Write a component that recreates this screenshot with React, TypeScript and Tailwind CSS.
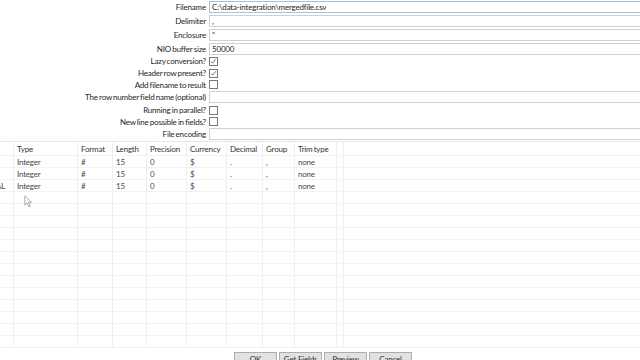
import type { ReactNode } from "react";

type Field =
  | { label: string; kind: "input"; value?: string; h: number; focus?: boolean }
  | { label: string; kind: "check"; checked: boolean; h: number };

const fields: Field[] = [
  { label: "Filename", kind: "input", value: "C:\\data-integration\\mergedfile.csv", h: 14, focus: true },
  { label: "Delimiter", kind: "input", value: ",", h: 14 },
  { label: "Enclosure", kind: "input", value: "\"", h: 14 },
  { label: "NIO buffer size", kind: "input", value: "50000", h: 13 },
  { label: "Lazy conversion?", kind: "check", checked: true, h: 12 },
  { label: "Header row present?", kind: "check", checked: true, h: 12 },
  { label: "Add filename to result", kind: "check", checked: false, h: 11 },
  { label: "The row number field name (optional)", kind: "input", value: "", h: 14 },
  { label: "Running in parallel?", kind: "check", checked: false, h: 12 },
  { label: "New line possible in fields?", kind: "check", checked: false, h: 11 },
  { label: "File encoding", kind: "input", value: "", h: 13 },
];

const columns = [
  { name: "", w: "w-[14px]" },
  { name: "Type", w: "w-[64px]" },
  { name: "Format", w: "w-[35px]" },
  { name: "Length", w: "w-[34px]" },
  { name: "Precision", w: "w-[40px]" },
  { name: "Currency", w: "w-[40px]" },
  { name: "Decimal", w: "w-[36px]" },
  { name: "Group", w: "w-[32px]" },
  { name: "Trim type", w: "w-[42px]" },
  { name: "", w: "w-[7px]" },
];

const rows = [
  ["", "Integer", "#", "15", "0", "$", ".", ",", "none", ""],
  ["", "Integer", "#", "15", "0", "$", ".", ",", "none", ""],
  ["TOTAL", "Integer", "#", "15", "0", "$", ".", ",", "none", ""],
];

function Checkbox({ checked }: { checked: boolean }) {
  return (
    <div className="h-[9px] w-[9px] border border-[#7a7a7a] bg-white">
      {checked ? (
        <svg viewBox="0 0 9 9" className="h-full w-full">
          <path d="M1.2 4.4 L3.3 6.6 L7.6 1.6" fill="none" stroke="#333" strokeWidth="0.9" />
        </svg>
      ) : null}
    </div>
  );
}

function Row({ cells, header }: { cells: ReactNode[]; header?: boolean }) {
  return (
    <div className={`flex ${header ? "h-[14px]" : "h-[12px]"} border-b border-[#f3f3f3]`}>
      {columns.map((c, i) => (
        <div
          key={i}
          className={`${c.w} flex shrink-0 overflow-hidden whitespace-nowrap border-r border-[#efefef] ${
            i === 0 ? "justify-end pr-[8px]" : "pl-[3px]"
          } ${header ? "leading-[14px] text-[#333]" : "leading-[12px] text-[#4a4a4a]"}`}
        >
          {cells[i]}
        </div>
      ))}
      <div className="flex-1" />
    </div>
  );
}

export default function App() {
  return (
    <div
      className="relative h-[360px] w-[640px] overflow-hidden bg-white text-[8px] tracking-[-0.2px] text-[#262626] [word-spacing:-0.6px]"
      style={{ fontFamily: 'Lato, "Noto Sans", sans-serif' }}
    >
      <div className="flex flex-col">
        {fields.map((f) => (
          <div key={f.label} className="flex items-center" style={{ height: f.h }}>
            <div className="w-[207px] shrink-0 whitespace-nowrap pr-[1px] text-right">
              {f.label}
            </div>
            <div className="ml-[2px] flex-1">
              {f.kind === "input" ? (
                <div
                  className={`h-[12px] w-[440px] border bg-white pl-[2px] leading-[10px] ${
                    f.focus ? "border-[#9ec4e4]" : "border-[#d0d0d0]"
                  }`}
                >
                  {f.value}
                </div>
              ) : (
                <Checkbox checked={f.checked} />
              )}
            </div>
          </div>
        ))}
      </div>

      <div className="mt-[1px] border-t border-[#e8e8e8]">
        <Row header cells={columns.map((c) => c.name)} />
        {rows.map((r, i) => (
          <Row key={i} cells={r} />
        ))}
        {Array.from({ length: 13 }).map((_, i) => (
          <Row key={`e${i}`} cells={[]} />
        ))}
      </div>

      <div className="mt-[4px] ml-[234px] flex gap-[2px]">
        {["OK", "Get Fields", "Preview", "Cancel"].map((b) => (
          <button
            key={b}
            type="button"
            className="h-[14px] w-[43px] border border-[#adadad] bg-[#e1e1e1] text-center text-[8px] leading-[12px] text-[#333]"
          >
            {b}
          </button>
        ))}
      </div>

      <svg viewBox="0 0 12 18" className="absolute left-[24px] top-[195px] h-[13px] w-[9px]">
        <path
          d="M1 1 L1 14 L4 11 L6.5 16.5 L8.5 15.6 L6 10.2 L10.2 10.2 Z"
          fill="#fff"
          stroke="#8a8a8a"
          strokeWidth="1"
          strokeLinejoin="round"
        />
      </svg>
    </div>
  );
}
